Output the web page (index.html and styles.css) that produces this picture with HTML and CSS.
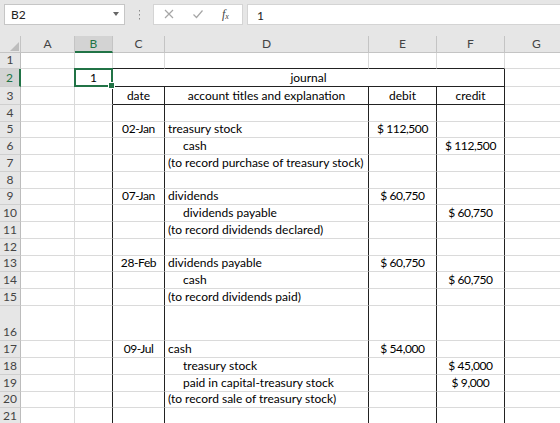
FILE: index.html
```html
<!DOCTYPE html>
<html lang="en">
<head>
    <meta charset="UTF-8">
    <meta name="viewport" content="width=device-width, initial-scale=1.0">
    <title>Journal - treasury stock</title>
    <link rel="stylesheet" href="styles.css">
</head>
<body>
    <div class="toolbar">
        <div class="name-box">
            <span>B2</span>
            <span class="caret"></span>
        </div>
        <div class="grip">
            <svg width="3" height="11" viewBox="0 0 3 11"><rect x="1" y="1" width="1" height="1.5" fill="#8a8a8a"/><rect x="1" y="5" width="1" height="1.5" fill="#8a8a8a"/><rect x="1" y="9" width="1" height="1.5" fill="#8a8a8a"/></svg>
        </div>
        <div class="fx-buttons">
            <svg class="btn" width="12" height="12" viewBox="0 0 12 12"><path d="M2 2 L10 10 M10 2 L2 10" stroke="#a6a6a6" stroke-width="1.2" fill="none"/></svg>
            <svg class="btn" width="12" height="12" viewBox="0 0 12 12"><path d="M1.5 6.5 L4.5 9.5 L10.5 2.5" stroke="#a6a6a6" stroke-width="1.2" fill="none"/></svg>
            <span class="fx">f<sub>x</sub></span>
        </div>
        <div class="formula-input">1</div>
    </div>

    <table class="sheet">
        <colgroup>
            <col class="c-rh">
            <col class="c-a">
            <col class="c-b">
            <col class="c-c">
            <col class="c-d">
            <col class="c-e">
            <col class="c-f">
            <col class="c-g">
        </colgroup>
        <thead>
            <tr class="head">
                <th class="corner"><svg width="9" height="9" viewBox="0 0 9 9"><polygon points="9,0 9,9 0,9" fill="#bdbdbd"/></svg></th>
                <th>A</th>
                <th class="sel">B</th>
                <th>C</th>
                <th>D</th>
                <th>E</th>
                <th>F</th>
                <th>G</th>
            </tr>
        </thead>
        <tbody>
            <tr class="h16">
                <td class="rn">1</td><td></td><td></td>
                <td class="top"></td><td class="top"></td><td class="top"></td><td class="top"></td><td></td>
            </tr>
            <tr class="h18">
                <td class="rn sel">2</td><td></td>
                <td class="edge active"><span class="num">1</span><div class="cursor"><span class="handle"></span></div></td>
                <td class="line mid hd" colspan="4">journal</td><td></td>
            </tr>
            <tr class="h18">
                <td class="rn">3</td><td></td><td class="edge"></td>
                <td class="line mid hd">date</td>
                <td class="line mid hd">account titles and explanation</td>
                <td class="line mid hd">debit</td>
                <td class="line mid hd">credit</td><td></td>
            </tr>
            <tr class="h17">
                <td class="rn">4</td><td></td><td class="edge"></td>
                <td class="line"></td><td class="line"></td><td class="line"></td><td class="line"></td><td></td>
            </tr>
            <tr class="h16">
                <td class="rn">5</td><td></td><td class="edge"></td>
                <td class="line mid num">02-Jan</td><td class="line">treasury stock</td><td class="line mid num">$ 112,500</td><td class="line"></td><td></td>
            </tr>
            <tr class="h17">
                <td class="rn">6</td><td></td><td class="edge"></td>
                <td class="line"></td><td class="line indent">cash</td><td class="line"></td><td class="line mid num">$ 112,500</td><td></td>
            </tr>
            <tr class="h17">
                <td class="rn">7</td><td></td><td class="edge"></td>
                <td class="line"></td><td class="line">(to record purchase of treasury stock)</td><td class="line"></td><td class="line"></td><td></td>
            </tr>
            <tr class="h17">
                <td class="rn">8</td><td></td><td class="edge"></td>
                <td class="line"></td><td class="line"></td><td class="line"></td><td class="line"></td><td></td>
            </tr>
            <tr class="h16">
                <td class="rn">9</td><td></td><td class="edge"></td>
                <td class="line mid num">07-Jan</td><td class="line">dividends</td><td class="line mid num">$ 60,750</td><td class="line"></td><td></td>
            </tr>
            <tr class="h17">
                <td class="rn">10</td><td></td><td class="edge"></td>
                <td class="line"></td><td class="line indent">dividends payable</td><td class="line"></td><td class="line mid num">$ 60,750</td><td></td>
            </tr>
            <tr class="h17">
                <td class="rn">11</td><td></td><td class="edge"></td>
                <td class="line"></td><td class="line">(to record dividends declared)</td><td class="line"></td><td class="line"></td><td></td>
            </tr>
            <tr class="h17">
                <td class="rn">12</td><td></td><td class="edge"></td>
                <td class="line"></td><td class="line"></td><td class="line"></td><td class="line"></td><td></td>
            </tr>
            <tr class="h16">
                <td class="rn">13</td><td></td><td class="edge"></td>
                <td class="line mid num">28-Feb</td><td class="line">dividends payable</td><td class="line mid num">$ 60,750</td><td class="line"></td><td></td>
            </tr>
            <tr class="h17">
                <td class="rn">14</td><td></td><td class="edge"></td>
                <td class="line"></td><td class="line indent">cash</td><td class="line"></td><td class="line mid num">$ 60,750</td><td></td>
            </tr>
            <tr class="h17">
                <td class="rn">15</td><td></td><td class="edge"></td>
                <td class="line"></td><td class="line">(to record dividends paid)</td><td class="line"></td><td class="line"></td><td></td>
            </tr>
            <tr class="h35">
                <td class="rn">16</td><td></td><td class="edge"></td>
                <td class="line"></td><td class="line"></td><td class="line"></td><td class="line"></td><td></td>
            </tr>
            <tr class="h17">
                <td class="rn">17</td><td></td><td class="edge"></td>
                <td class="line mid num">09-Jul</td><td class="line">cash</td><td class="line mid num">$ 54,000</td><td class="line"></td><td></td>
            </tr>
            <tr class="h17">
                <td class="rn">18</td><td></td><td class="edge"></td>
                <td class="line"></td><td class="line indent">treasury stock</td><td class="line"></td><td class="line mid num">$ 45,000</td><td></td>
            </tr>
            <tr class="h17">
                <td class="rn">19</td><td></td><td class="edge"></td>
                <td class="line"></td><td class="line indent">paid in capital-treasury stock</td><td class="line"></td><td class="line mid num">$ 9,000</td><td></td>
            </tr>
            <tr class="h16">
                <td class="rn">20</td><td></td><td class="edge"></td>
                <td class="line"></td><td class="line">(to record sale of treasury stock)</td><td class="line"></td><td class="line"></td><td></td>
            </tr>
            <tr class="h17">
                <td class="rn">21</td><td></td><td class="edge"></td>
                <td class="line"></td><td class="line"></td><td class="line"></td><td class="line"></td><td></td>
            </tr>
        </tbody>
    </table>
</body>
</html>
```

FILE: styles.css
```css
body {
    margin: 0;
    width: 560px;
    height: 423px;
    overflow: hidden;
    background-color: #fff;
    font-family: Lato, "Liberation Sans", sans-serif;
    color: #000;
}

/* formula bar */
.toolbar {
    display: flex;
    align-items: center;
    height: 36px;
    padding: 0 0 8px 4px;
    box-sizing: border-box;
    background-color: #e6e6e6;
}

.name-box {
    display: flex;
    align-items: center;
    justify-content: space-between;
    width: 121px;
    height: 21px;
    box-sizing: border-box;
    padding: 0 5px 0 6px;
    background: white;
    border: 1px solid #c6c6c6;
    font-size: 12px;
    color: #222;
}

.caret {
    width: 0;
    height: 0;
    border-left: 3px solid transparent;
    border-right: 3px solid transparent;
    border-top: 4px solid #666;
}

.grip {
    display: flex;
    width: 27px;
    justify-content: center;
    padding-left: 1px;
}

.fx-buttons {
    display: flex;
    align-items: center;
    width: 90px;
    height: 21px;
    box-sizing: border-box;
    padding-left: 9px;
    gap: 17px;
    background: white;
    border: 1px solid #d4d4d4;
}

.fx {
    font-family: "Liberation Serif", serif;
    font-style: italic;
    font-size: 12px;
    color: #444;
    margin-left: 1px;
}

.fx sub {
    font-size: 8px;
    vertical-align: -1px;
}

.formula-input {
    flex: 1;
    height: 21px;
    box-sizing: border-box;
    margin-left: 4px;
    padding: 3px 0 0 9px;
    background: white;
    border: 1px solid #d4d4d4;
    border-right: none;
    font-size: 12px;
    color: #222;
}

/* grid */
.sheet {
    border-collapse: separate;
    border-spacing: 0;
    table-layout: fixed;
    width: 569px;
    font-size: 12px;
}

.c-rh { width: 21px; }
.c-a { width: 54px; }
.c-b { width: 38px; }
.c-c { width: 52px; }
.c-d { width: 204px; }
.c-e { width: 68px; }
.c-f { width: 68px; }
.c-g { width: 64px; }

.head th {
    height: 17px;
    padding: 0;
    box-sizing: border-box;
    background-color: #e6e6e6;
    border-right: 1px solid #c4c4c4;
    border-bottom: 1px solid #c4c4c4;
    font-weight: normal;
    font-size: 12px;
    color: #444;
    text-align: center;
    vertical-align: middle;
    line-height: 14px;
}

.head th.sel {
    background-color: #d3d3d3;
    color: #217346;
    border-bottom: 2px solid #217346;
}

.head th.corner {
    text-align: right;
    vertical-align: bottom;
    padding: 0 1px 1px 0;
    line-height: 0;
}

td {
    padding: 0 3px 1px;
    border-right: 1px solid #dadada;
    border-bottom: 1px solid #dadada;
    vertical-align: bottom;
    line-height: 14px;
    white-space: nowrap;
    overflow: hidden;
}

td.rn {
    padding: 0 0 1px;
    background-color: #e6e6e6;
    border-right: 1px solid #bcbcbc;
    border-bottom: 1px solid #cfcfcf;
    color: #444;
    font-size: 12px;
    text-align: center;
}

td.rn.sel {
    background-color: #d3d3d3;
    color: #217346;
    border-right: 2px solid #217346;
}

.h16 { height: 16px; }
.h17 { height: 17px; }
.h18 { height: 18px; }
.h35 { height: 35px; }

/* journal borders */
td.top { border-bottom-color: #222; }
td.edge { border-right-color: #222; }
td.line { border-right-color: #222; }
td.hd { border-bottom-color: #222; }
td.mid { text-align: center; }
td.num { letter-spacing: -0.4px; }
td.indent { padding-left: 18px; }

td.active {
    position: relative;
    overflow: visible;
    text-align: center;
}

.cursor {
    position: absolute;
    left: -1px;
    top: -1px;
    right: -1px;
    bottom: -1px;
    border: 2px solid #217346;
}

.handle {
    position: absolute;
    right: -4px;
    bottom: -4px;
    width: 5px;
    height: 5px;
    background: #217346;
    border: 1px solid #fff;
}
```
